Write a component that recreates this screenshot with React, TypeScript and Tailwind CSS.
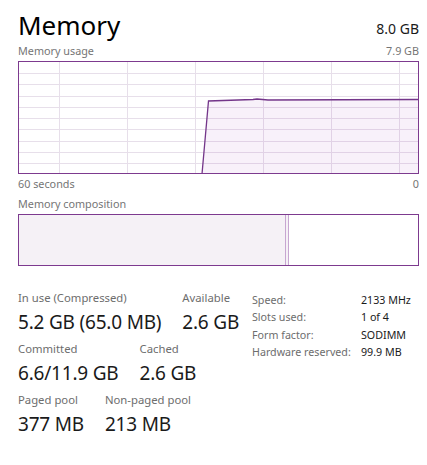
import React from "react";

const PURPLE = "#74368a";
const GRID = "#e7dfea";

const hLines = [73, 84, 96, 107, 118, 129, 141, 152, 163];
const vLines = [59, 127, 195, 263, 331, 399];

function UsageGraph() {
    return (
        <div className="h-[113px] w-[401px] border border-[#7d3a8f] bg-white">
            <svg width="399" height="111" viewBox="19 62 399 111" className="block">
                {hLines.map((y) => (
                    <line key={"h" + y} x1="19" x2="418" y1={y + 0.5} y2={y + 0.5} stroke={GRID} strokeWidth="1" />
                ))}
                {vLines.map((x) => (
                    <line key={"v" + x} x1={x + 0.5} x2={x + 0.5} y1="62" y2="173" stroke={GRID} strokeWidth="1" />
                ))}
                <polygon
                    points="202,174 208.5,101 253,99.5 257,99 268,100 419,99.5 419,174"
                    fill="rgba(139,18,174,0.06)"
                />
                <polyline
                    points="202,174 208.5,101 253,99.5 257,99 268,100 419,99.5"
                    fill="none"
                    stroke={PURPLE}
                    strokeWidth="1.3"
                />
            </svg>
        </div>
    );
}

function CompositionBar() {
    return (
        <div className="flex h-[52px] w-[401px] border border-[#7d3a8f] bg-white">
            <div className="h-full w-[266px] bg-[#f5f1f6]" />
            <div className="h-full w-px bg-[#c7a6d1]" />
            <div className="h-full w-[2px] bg-[#f5f1f6]" />
            <div className="h-full w-px bg-[#c7a6d1]" />
            <div className="h-full flex-1 bg-white" />
        </div>
    );
}

function Stat({ label, value }: { label: string; value: string }) {
    return (
        <div className="flex flex-col whitespace-nowrap">
            <div className="text-[11.3px] leading-[16px] text-[#6d6d6d]">{label}</div>
            <div className="mt-[3px] text-[19px] leading-[26px] tracking-[-0.2px] text-[#1a1a1a]">{value}</div>
        </div>
    );
}

const specs = [
    ["Speed:", "2133 MHz"],
    ["Slots used:", "1 of 4"],
    ["Form factor:", "SODIMM"],
    ["Hardware reserved:", "99.9 MB"],
];

export default function App() {
    return (
        <div
            className="h-[465px] w-[427px] bg-white pl-[18px] pr-[8px]"
            style={{ fontFamily: '"Segoe UI", "Noto Sans", "Open Sans", sans-serif' }}
        >
            <div className="flex h-[42px] items-end justify-between">
                <div className="text-[26px] leading-[34px] text-black">Memory</div>
                <div className="mb-[4px] text-[14px] leading-[18px] text-[#1a1a1a]">8.0 GB</div>
            </div>
            <div className="flex h-[19px] items-center justify-between whitespace-nowrap text-[10.8px] text-[#757575]">
                <span>Memory usage</span>
                <span>7.9 GB</span>
            </div>
            <UsageGraph />
            <div className="flex h-[20px] items-center justify-between whitespace-nowrap text-[10.8px] text-[#757575]">
                <span>60 seconds</span>
                <span>0</span>
            </div>
            <div className="flex h-[20px] items-center whitespace-nowrap text-[10.8px] text-[#757575]">Memory composition</div>
            <CompositionBar />

            <div className="mt-[24px] flex">
                <div className="flex w-[234px] flex-col gap-[6px]">
                    <div className="flex gap-[21px]">
                        <Stat label="In use (Compressed)" value="5.2 GB (65.0 MB)" />
                        <Stat label="Available" value="2.6 GB" />
                    </div>
                    <div className="flex gap-[21px]">
                        <Stat label="Committed" value="6.6/11.9 GB" />
                        <Stat label="Cached" value="2.6 GB" />
                    </div>
                    <div className="flex gap-[21px]">
                        <Stat label="Paged pool" value="377 MB" />
                        <Stat label="Non-paged pool" value="213 MB" />
                    </div>
                </div>
                <div className="mt-[1px] flex flex-col">
                    {specs.map(([k, v]) => (
                        <div key={k} className="flex h-[17.5px] items-center whitespace-nowrap text-[10.7px]">
                            <span className="w-[109px] text-[#6d6d6d]">{k}</span>
                            <span className="text-[#1a1a1a]">{v}</span>
                        </div>
                    ))}
                </div>
            </div>
        </div>
    );
}
